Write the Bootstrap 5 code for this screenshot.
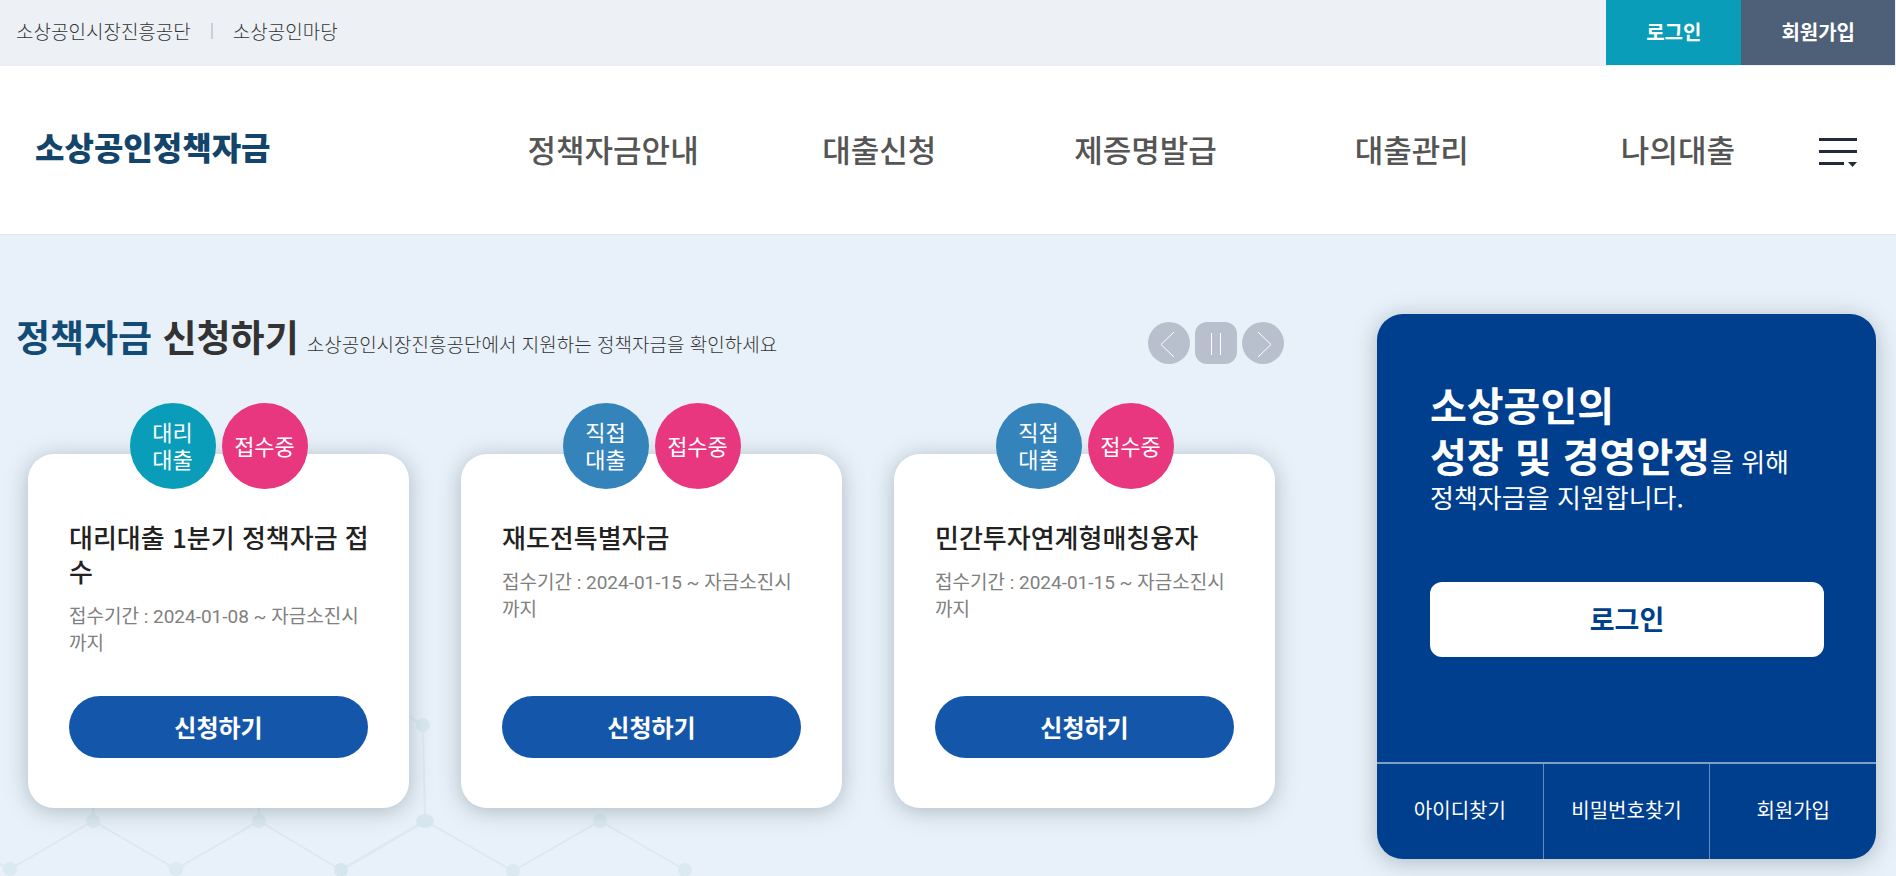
<!DOCTYPE html>
<html lang="ko">
<head>
<meta charset="utf-8">
<meta name="viewport" content="width=device-width, initial-scale=1">
<title>소상공인정책자금</title>
<link href="https://cdn.jsdelivr.net/npm/bootstrap@5.3.0/dist/css/bootstrap.min.css" rel="stylesheet">
<style>
  body { font-family: "Noto Sans CJK KR", sans-serif; color: #555; background: #fff; }
  a { text-decoration: none; color: inherit; }

  /* top utility bar */
  .util-bar { background: #edf1f5; height: 66px; padding-right: 1px; font-size: 19px; font-weight: 300; color: #333; }
  .util-sep { width: 2px; height: 16px; margin: 0 20px; background: #c9cfd5; }
  .util-btn { border: 0; border-radius: 0; height: 65px; padding: 0 40px 2px; font-size: 20px; font-weight: 700; color: #fff; }
  .util-login { background: #0a9db9; }
  .util-join { background: #4e6077; }

  /* main header */
  .site-head { height: 169px; border-bottom: 1px solid #e3e6e9; padding: 0 39px 0 35px; }
  .brand { width: 445px; padding-bottom: 8px; font-size: 32px; font-weight: 900; color: #13456a; line-height: 40px; }
  .gnb { padding-bottom: 2px; font-size: 31px; font-weight: 500; line-height: 40px; color: #555; }
  .menu-btn { width: 38px; }

  /* hero */
  .hero { background: #e8f1f9; padding: 79px 20px 17px 16px; gap: 90px; }
  .hero-bg { left: 0; bottom: 0; pointer-events: none; }
  .hero-top { padding-right: 3px; }
  .hero h1 { font-size: 37px; font-weight: 700; line-height: 44px; color: #333; }
  .hero h1 span { color: #124c76; }
  .hero-sub { font-size: 19px; font-weight: 300; line-height: 28px; color: #333; }
  .slide-nav { gap: 5px; }
  .slide-btn { width: 42px; height: 42px; border: 0; background: #b9c0cd; border-radius: 50%; }
  .slide-btn.pause { border-radius: 12px; }
  .fund-grid { display: grid; grid-template-columns: repeat(3, minmax(0, 1fr)); gap: 52px; margin: 90px 12px 0; }
  .fund { background: #fff; border-radius: 26px; padding: 66px 41px 50px; min-height: 354px; box-shadow: 0 3px 22px rgba(80, 95, 105, .38); }
  .fund-tags { top: -51px; left: 50%; margin-left: -89px; gap: 6px; }
  .fund-tag { width: 86px; height: 86px; padding-bottom: 2px; border-radius: 50%; font-size: 22px; line-height: 27px; color: #fff; text-align: center; }
  .tag-agent { background: #0a9db9; }
  .tag-direct { background: #3583bb; }
  .tag-open { background: #e8367f; }
  .fund h2 { font-size: 26px; font-weight: 500; line-height: 34px; color: #222; margin: 0 -6px 15px 0; }
  .fund p { font-family: Roboto, "Noto Sans CJK KR", sans-serif; font-size: 19px; line-height: 27px; color: #808080; }
  .apply { height: 62px; border: 0; border-radius: 31px; background: #1457aa; color: #fff; font-size: 24px; font-weight: 700; }

  /* login panel */
  .login-box { flex: 0 0 499px; min-height: 545px; background: #003f8e; border-radius: 26px; color: #fff; box-shadow: 0 3px 22px rgba(80, 95, 105, .38); }
  .login-body { padding: 65px 52px 0 53px; }
  .slogan { font-size: 26px; line-height: 32px; }
  .slogan strong { font-size: 40px; font-weight: 700; line-height: 51px; }
  .login-btn { height: 75px; border: 0; border-radius: 12px; background: #fff; color: #003f8e; font-size: 27px; font-weight: 700; margin-top: 69px; }
  .login-links { height: 97px; border-top: 2px solid rgba(255, 255, 255, .5); font-size: 20px; }
  .login-links a { border-right: 1px solid rgba(255, 255, 255, .4); padding-bottom: 4px; }
  .login-links a:last-child { border: 0; }

  @media (max-width: 1599px) {
    .hero { flex-direction: column; gap: 40px; }
    .brand { width: 300px; }
    .gnb { font-size: 24px; }
  }
  @media (max-width: 991px) {
    .fund-grid { grid-template-columns: 1fr; gap: 80px; }
    .gnb { display: none !important; }
    .login-box { flex-basis: auto; }
  }
</style>
</head>
<body class="d-flex flex-column min-vh-100">

<div class="util-bar d-flex justify-content-between">
  <div class="d-flex align-items-center ps-3 pb-1">
    <a href="#">소상공인시장진흥공단</a>
    <span class="util-sep"></span>
    <a href="#">소상공인마당</a>
  </div>
  <div class="d-flex">
    <button type="button" class="util-btn util-login">로그인</button>
    <button type="button" class="util-btn util-join">회원가입</button>
  </div>
</div>

<header class="site-head d-flex align-items-center">
  <a href="#" class="brand flex-shrink-0">소상공인정책자금</a>
  <nav class="gnb d-flex flex-fill text-center" aria-label="주 메뉴">
    <a href="#" class="col">정책자금안내</a>
    <a href="#" class="col">대출신청</a>
    <a href="#" class="col">제증명발급</a>
    <a href="#" class="col">대출관리</a>
    <a href="#" class="col">나의대출</a>
  </nav>
  <button type="button" class="menu-btn btn p-0 pt-1 border-0 ms-2 flex-shrink-0" aria-label="전체메뉴">
    <svg width="38" height="30" viewBox="0 0 38 30" fill="#222b38" class="d-block"><rect y="1" width="38" height="3"/><rect y="13" width="38" height="3"/><rect y="25" width="25" height="3"/><path d="M29 25h9l-4.500 5z"/></svg>
  </button>
</header>

<main class="hero d-flex align-items-stretch flex-fill position-relative">
  <svg class="hero-bg position-absolute" width="700" height="180" viewBox="0 696 700 180" fill="#dbe9f1" aria-hidden="true">
    <g fill="none" stroke="#dde9f1" stroke-width="2">
      <path d="M0 864l10 5 83-48 83 48 83-48 82 49 84-49 88 50 87-50 85 49M93 821V700M259 821V700M425 821l-2-96-20-12"/>
      <path d="M341 870l84-49" stroke-width="3"/>
    </g>
    <circle cx="10" cy="869" r="7"/><circle cx="93" cy="821" r="7"/><circle cx="176" cy="869" r="7"/><circle cx="259" cy="821" r="7"/><circle cx="341" cy="870" r="7" fill="#d5e6ee"/><ellipse cx="425" cy="821" rx="9" ry="7" fill="#d5e6ee"/><circle cx="423" cy="725" r="7"/><circle cx="513" cy="871" r="7"/><circle cx="600" cy="821" r="7"/><circle cx="685" cy="870" r="7"/>
  </svg>

  <section class="flex-fill position-relative">
    <div class="hero-top d-flex justify-content-between align-items-start">
      <div class="d-flex align-items-baseline flex-wrap">
        <h1 class="m-0 me-2"><span>정책자금</span> 신청하기</h1>
        <p class="hero-sub m-0">소상공인시장진흥공단에서 지원하는 정책자금을 확인하세요</p>
      </div>
      <div class="slide-nav d-flex pt-2">
        <button type="button" class="slide-btn p-0" aria-label="이전"><svg width="42" height="42" fill="none" stroke="#fff" class="d-block"><path d="M26 10L13 22.500 26 35"/></svg></button>
        <button type="button" class="slide-btn pause p-0" aria-label="정지"><svg width="42" height="42" fill="none" stroke="#fff" class="d-block"><path d="M16.500 11v22M25.500 11v22"/></svg></button>
        <button type="button" class="slide-btn p-0" aria-label="다음"><svg width="42" height="42" fill="none" stroke="#fff" class="d-block"><path d="M16 10l13 12.500L16 35"/></svg></button>
      </div>
    </div>

    <div class="fund-grid">
      <article class="fund position-relative d-flex flex-column">
        <div class="fund-tags position-absolute d-flex">
          <span class="fund-tag tag-agent d-flex align-items-center justify-content-center">대리<br>대출</span>
          <span class="fund-tag tag-open d-flex align-items-center justify-content-center">접수중</span>
        </div>
        <h2>대리대출 1분기 정책자금 접수</h2>
        <p class="m-0">접수기간 : 2024-01-08 ~ 자금소진시까지</p>
        <button type="button" class="apply w-100 mt-auto">신청하기</button>
      </article>
      <article class="fund position-relative d-flex flex-column">
        <div class="fund-tags position-absolute d-flex">
          <span class="fund-tag tag-direct d-flex align-items-center justify-content-center">직접<br>대출</span>
          <span class="fund-tag tag-open d-flex align-items-center justify-content-center">접수중</span>
        </div>
        <h2>재도전특별자금</h2>
        <p class="m-0">접수기간 : 2024-01-15 ~ 자금소진시까지</p>
        <button type="button" class="apply w-100 mt-auto">신청하기</button>
      </article>
      <article class="fund position-relative d-flex flex-column">
        <div class="fund-tags position-absolute d-flex">
          <span class="fund-tag tag-direct d-flex align-items-center justify-content-center">직접<br>대출</span>
          <span class="fund-tag tag-open d-flex align-items-center justify-content-center">접수중</span>
        </div>
        <h2>민간투자연계형매칭융자</h2>
        <p class="m-0">접수기간 : 2024-01-15 ~ 자금소진시까지</p>
        <button type="button" class="apply w-100 mt-auto">신청하기</button>
      </article>
    </div>
  </section>

  <aside class="login-box d-flex flex-column position-relative">
    <div class="login-body">
      <p class="slogan m-0"><strong>소상공인의<br>성장 및 경영안정</strong>을 위해<br>정책자금을 지원합니다.</p>
      <button type="button" class="login-btn w-100">로그인</button>
    </div>
    <nav class="login-links d-flex mt-auto text-center" aria-label="회원 메뉴">
      <a href="#" class="col d-flex align-items-center justify-content-center">아이디찾기</a>
      <a href="#" class="col d-flex align-items-center justify-content-center">비밀번호찾기</a>
      <a href="#" class="col d-flex align-items-center justify-content-center">회원가입</a>
    </nav>
  </aside>
</main>

<script src="https://cdn.jsdelivr.net/npm/bootstrap@5.3.0/dist/js/bootstrap.bundle.min.js"></script>
</body>
</html>
